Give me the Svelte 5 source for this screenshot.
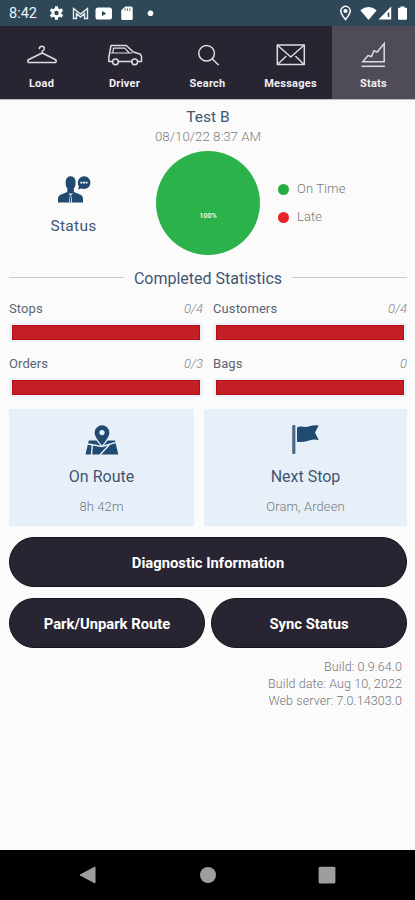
<script>
  const tabs = [
    { id: 'load', label: 'Load' },
    { id: 'driver', label: 'Driver' },
    { id: 'search', label: 'Search' },
    { id: 'messages', label: 'Messages' },
    { id: 'stats', label: 'Stats' }
  ];
  const active = 'stats';
  const stats = [
    { name: 'Stops', value: '0/4' },
    { name: 'Customers', value: '0/4' },
    { name: 'Orders', value: '0/3' },
    { name: 'Bags', value: '0' }
  ];
</script>

<div class="screen">
  <div class="system">
    <span class="clock">8:42</span>
    <svg class="left-icons" width="110" height="16" viewBox="0 0 110 16" fill="#fff">
      <g transform="translate(8.5 8)">
        <circle r="3.6" fill="none" stroke="#fff" stroke-width="2.8" />
        <path d="M0-6.8V-4M0 4V6.8M-5.9-3.4L-3.5-2M3.5 2L5.9 3.4M5.9-3.4L3.5-2M-3.5 2L-5.9 3.4" stroke="#fff" stroke-width="3" />
      </g>
      <path d="M25.5 13.5V3.5L32.5 9L39.5 3.5V13.5H36.5V8.5L32.5 12L28.5 8.5V13.5Z" fill="none" stroke="#e7edf1" stroke-width="1.4" />
      <rect x="47.5" y="2.5" width="16.5" height="12" rx="2.6" />
      <path d="M54 6V11L58.3 8.5Z" fill="#2f4858" />
      <path d="M77.5 1.5H83.5Q85 1.5 85 3V13.5Q85 15 83.5 15H75Q73.5 15 73.5 13.5V5.5Z" transform="translate(-.3 0)" />
      <path d="M77.4 4V6.5M79.8 4V6.5M82.2 4V6.5" stroke="#2f4858" stroke-width=".8" transform="translate(-.3 -.7)" />
      <circle cx="102.5" cy="8.2" r="2.8" />
    </svg>
    <svg class="right-icons" width="70" height="16" viewBox="0 0 70 16" fill="#fff">
      <path d="M6.5 14.5C3.8 11 1.8 8.8 1.8 6A4.7 4.7 0 0 1 11.2 6C11.2 8.8 9.2 11 6.5 14.5Z" fill="none" stroke="#fff" stroke-width="1.5" />
      <circle cx="6.5" cy="6" r="2.1" />
      <path d="M21.3 5.3Q29.5-1.3 37.7 5.3L29.5 15Z" />
      <path d="M52.2 1.5V14.5H39.5Z" />
      <path d="M49.5 7.5V12" stroke="#2f4858" stroke-width="1.6" />
      <path d="M60 2.8H61.5V1.5H65.5V2.8H67Q68 2.8 68 3.8V13.8Q68 14.8 67 14.8H60Q59 14.8 59 13.8V3.8Q59 2.8 60 2.8Z" />
    </svg>
  </div>

  <nav>
    {#each tabs as tab (tab.id)}
      <div class="tab" class:active={tab.id === active}>
        <svg width="36" height="28" viewBox="0 0 36 28" fill="none" stroke="#dedce1" stroke-width="1.5" stroke-linejoin="round" stroke-linecap="round">
          {#if tab.id === 'load'}
            <path d="M15.3 7.6Q15.6 5.2 18 5.3Q20.4 5.5 20.3 7.8Q20.2 9.4 18.2 10.1V12L31.2 18.5Q32.9 19.6 31.8 21.4H4.2Q2.9 19.5 4.8 18.5L18.2 12" />
          {:else if tab.id === 'driver'}
            <path d="M5.3 20.5H1.8V16.5L4 4.5H19.3L26.3 11L33 13L34.5 15.3V20.5H31.2M11.2 20.5H24.5" />
            <path d="M4.2 12H24.8M7.3 7.2H17.8L21.8 11.5M6.5 7.2L5.8 12" stroke-width="1.2" />
            <circle cx="8.5" cy="20.8" r="2.9" /><circle cx="27.7" cy="20.8" r="2.9" />
          {:else if tab.id === 'search'}
            <circle cx="16.6" cy="12.3" r="7.8" /><path d="M22.3 18L28.2 23.7" />
          {:else if tab.id === 'messages'}
            <rect x="4.3" y="4" width="27" height="19.5" />
            <path d="M4.5 4.3L17.8 16L31 4.3M4.7 23.2L12.8 15.5M30.8 23.2L22.8 15.5" />
          {:else}
            <path d="M6.8 20.8L12 14.5L15.4 15.5L18 9.8L21.2 11L28.2 2.5V20.8Z" stroke-linejoin="miter" />
            <path d="M5.5 25.3H29" stroke-linecap="butt" />
          {/if}
        </svg>
        <span>{tab.label}</span>
      </div>
    {/each}
  </nav>

  <main>
    <div class="title">Test B</div>
    <div class="date">08/10/22 8:37 AM</div>

    <section class="overview">
      <div class="status">
        <svg width="34" height="28" viewBox="0 0 34 28" fill="#214a70">
          <path d="M8.7 6.2A4.9 4.9 0 0 1 18.5 6.2V9.5Q18.3 12 16.9 13.1V17L23 19.5Q26 20.8 26 24V27.5H1V24Q1 20.8 4 19.5L10.3 17V13.1Q8.9 12 8.7 9.5Z" />
          <path d="M11.2 18.5L13.6 21L16 18.5M12.5 21.5L12 27.5H15.2L14.7 21.5Z" fill="#d5e1ea" />
          <path d="M13.6 22V27" stroke="#214a70" stroke-width="1" />
          <path d="M20.8 7.8A6.3 6.3 0 1 1 24.8 13.5L21 14.2L22 11.5Q20.8 10 20.8 7.8Z" />
          <path d="M23.4 7.6H30.8" stroke="#fff" stroke-width="1.6" stroke-dasharray="1.9 .7" />
        </svg>
        <span>Status</span>
      </div>
      <div class="pie"><span>100%</span></div>
      <div class="legend">
        <div><i class="ok"></i><span>On Time</span></div>
        <div><i class="late"></i><span>Late</span></div>
      </div>
    </section>

    <div class="heading"><hr /><h2>Completed Statistics</h2><hr /></div>

    <section class="stats">
      {#each stats as s (s.name)}
        <div class="stat">
          <div class="row"><span>{s.name}</span><em>{s.value}</em></div>
          <div class="track"><div class="bar"></div></div>
        </div>
      {/each}
    </section>

    <section class="cards">
      <div class="card">
        <svg width="34" height="32" viewBox="0 0 34 32" fill="#214a70">
          <path d="M3.8 16.5H30L33.3 30.5H.5Z" />
          <path d="M3 20L17 22.5L31 18.3M24.2 21L15 30.8M7.3 21L6.5 31" fill="none" stroke="#e7f0f8" stroke-width="1.4" />
          <path d="M17 22.4C12.6 17.5 9 13 9 8.7A8 8 0 0 1 25 8.7C25 13 21.4 17.5 17 22.4Z" stroke="#e7f0f8" stroke-width="1.2" />
          <circle cx="17" cy="8.6" r="2.6" fill="#e7f0f8" />
        </svg>
        <span class="name">On Route</span>
        <span class="detail">8h 42m</span>
      </div>
      <div class="card">
        <svg width="34" height="32" viewBox="0 0 34 32" fill="#214a70">
          <rect x="3.2" y="1" width="3.2" height="29" rx="1" fill="#4c6a87" />
          <path d="M8 3.7C12.5 1 16.5 4.5 20.5 2.3Q24.5 1 29.7 1.5L26 8.5L29.8 16.2C25 14.5 21.5 16 18.5 17Q13.5 18.5 8 17.8Z" />
        </svg>
        <span class="name">Next Stop</span>
        <span class="detail">Oram, Ardeen</span>
      </div>
    </section>

    <button class="wide">Diagnostic Information</button>
    <div class="pair">
      <button>Park/Unpark Route</button>
      <button>Sync Status</button>
    </div>

    <footer>
      <div>Build: 0.9.64.0</div>
      <div>Build date: Aug 10, 2022</div>
      <div>Web server: 7.0.14303.0</div>
    </footer>
  </main>

  <div class="softkeys">
    <svg width="18" height="18" viewBox="0 0 18 18"><path d="M1 9L16 1V17Z" fill="#9e9e9e" stroke="#9e9e9e" stroke-linejoin="round" /></svg>
    <svg width="18" height="18" viewBox="0 0 18 18"><circle cx="9" cy="9" r="8" fill="#9e9e9e" /></svg>
    <svg width="18" height="18" viewBox="0 0 18 18"><rect x=".6" y=".8" width="16.8" height="16.6" rx="1.5" fill="#9e9e9e" /></svg>
  </div>
</div>

<style>
  :global(body) { margin: 0; background: #fbfbfb; }
  .screen {
    width: 415px; height: 900px; display: flex; flex-direction: column;
    overflow: hidden; background: #fbfbfb; color: #3f5673;
    font-family: Roboto, "Liberation Sans", sans-serif;
  }
  svg { display: block; flex: none; }
  .system { height: 26px; flex: none; display: flex; align-items: center; background: #2f4858; padding: 0 8px 0 9px; box-sizing: border-box; }
  .clock { width: 39px; font-size: 14.5px; color: #f1f4f5; line-height: 26px; padding-top: 2px; }
  .right-icons { margin-left: auto; margin-right: -2px; }
  nav { height: 74px; flex: none; display: flex; background: #292432; border-bottom: 1px solid #bdb9c9; box-sizing: border-box; }
  .tab { flex: 1; display: flex; flex-direction: column; align-items: center; padding-top: 15px; color: #f0eff2; }
  .tab span { margin-top: 8px; font-size: 11px; line-height: 14px; font-weight: 700; letter-spacing: .25px; }
  .active { background: #504c57; }
  main { flex: 1; display: flex; flex-direction: column; padding: 8px 8px 0 9px; }
  .title { text-align: center; font-size: 15.5px; line-height: 19px; }
  .date { text-align: center; font-size: 13.3px; line-height: 19px; font-weight: 300; color: #808080; }
  .overview { display: flex; align-items: center; height: 104px; margin-top: 5px; }
  .status { width: 129px; margin-right: 18px; padding-top: 4px; display: flex; flex-direction: column; align-items: center; font-size: 15.5px; line-height: 20px; letter-spacing: .3px; }
  .status span { margin-top: 13px; }
  .pie { width: 104px; height: 104px; border-radius: 50%; background: #2bb24b; display: flex; justify-content: center; }
  .pie span { padding-top: 60px; font-size: 7px; line-height: 10px; color: #fff; font-weight: 500; }
  .legend { margin-left: 18px; display: flex; flex-direction: column; gap: 12px; font-size: 13px; line-height: 16px; font-weight: 300; letter-spacing: .1px; color: #777; }
  .legend div { display: flex; align-items: center; gap: 8px; }
  .legend i { width: 11px; height: 11px; border-radius: 50%; }
  .ok { background: #23ad43; }
  .late { background: #e9232b; }
  .heading { display: flex; align-items: center; gap: 10px; margin-top: 12px; height: 20px; }
  hr { flex: 1; height: 1px; margin: 0; border: 0; background: #c9c9c9; }
  h2 { margin: 0; font-size: 16px; line-height: 20px; font-weight: 400; padding-top: 3px; }
  .stats { display: grid; grid-template-columns: 194px 194px; column-gap: 10px; row-gap: 0; margin-top: 12px; }
  .stat { height: 55px; }
  .row { display: flex; justify-content: space-between; font-size: 13px; line-height: 20px; letter-spacing: .1px; color: #5a6477; }
  .row em { font-weight: 300; color: #7f858d; letter-spacing: 0; }
  .track { height: 19px; margin-top: 4px; padding: 2px 3px; box-sizing: border-box; background: #eaf3f8; }
  .bar { height: 15px; box-sizing: border-box; background: #c41f26; border: 1px solid #b90d14; }
  .cards { display: flex; gap: 10px; height: 117px; }
  .card { width: 185px; background: #e7f0f8; display: flex; flex-direction: column; align-items: center; }
  .card + .card { width: 203px; }
  .card svg { margin-top: 15px; }
  .name { font-size: 16px; line-height: 20px; margin-top: 11px; }
  .detail { font-size: 13px; line-height: 18px; margin-top: 11px; font-weight: 300; color: #737a82; letter-spacing: .1px; }
  button { flex: 1; padding: 1px 0 0; border: 1px solid #17131e; border-radius: 25px; background: #292432; color: #fff; font: 700 14.8px/20px Roboto, sans-serif; }
  .wide { flex: none; margin-top: 11px; height: 50px; }
  .pair { display: flex; gap: 6px; margin-top: 11px; }
  .pair button { height: 50px; }
  footer { margin-top: 10px; padding-right: 5px; text-align: right; font-size: 12.5px; line-height: 17px; font-weight: 300; color: #777; letter-spacing: .1px; }
  .softkeys { height: 50px; flex: none; display: flex; align-items: center; gap: 101.5px; padding-left: 79px; background: #000; }
</style>
